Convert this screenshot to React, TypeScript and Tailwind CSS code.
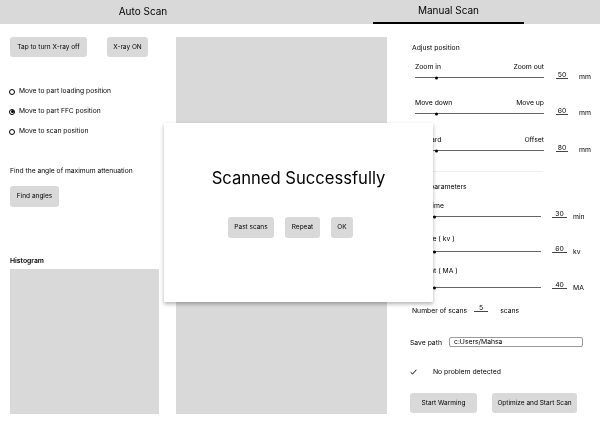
import type { ReactNode } from 'react'

function Btn({ children, className = '' }: { children: ReactNode; className?: string }) {
  return (
    <div
      className={`flex items-center justify-center rounded-[3px] bg-[#d9d9d9] text-[6.5px] leading-[9px] text-black ${className}`}
    >
      {children}
    </div>
  )
}

function Radio({ label, checked = false }: { label: string; checked?: boolean }) {
  return (
    <div className="flex h-[9px] items-center gap-[4px] text-[6.7px] leading-[9px]">
      <span className="-ml-[1px] flex h-[6px] w-[6px] flex-none items-center justify-center rounded-full border border-black">
        {checked && <span className="h-[3px] w-[3px] rounded-full bg-black" />}
      </span>
      {label}
    </div>
  )
}

type AdjustProps = { left: string; right: string; value: string; className: string }

function AdjustSlider({ left, right, value, className }: AdjustProps) {
  return (
    <div className={className}>
      <div className="flex w-[134px] justify-between pl-[5px] text-[6.8px] leading-[9px]">
        <span>{left}</span>
        <span>{right}</span>
      </div>
      <div className="mt-[2px] flex h-[9px] items-center pl-[5px] text-[6.8px]">
        <div className="relative h-px w-[129px] flex-none bg-[#666]">
          <span className="absolute left-[20px] top-1/2 h-[3px] w-[3px] -translate-y-1/2 rounded-full bg-black" />
        </div>
        <span className="mb-[5px] ml-[12px] w-[12px] border-b border-[#444] text-center leading-[7px]">{value}</span>
        <span className="mb-[2px] ml-[11px] leading-[9px]">mm</span>
      </div>
    </div>
  )
}

type ParamProps = { label: string; value: string; unit: string; className: string; trackGap: string }

function ParamSlider({ label, value, unit, className, trackGap }: ParamProps) {
  return (
    <div className={className}>
      <div className="pl-[2px] text-[6.8px] leading-[9px]">{label}</div>
      <div className={`flex h-[9px] items-center pl-[5px] text-[6.8px] ${trackGap}`}>
        <div className="relative h-px w-[126px] flex-none bg-[#666]">
          <span className="absolute left-[18px] top-1/2 h-[3px] w-[3px] -translate-y-1/2 rounded-full bg-black" />
        </div>
        <span className="mb-[6px] ml-[11px] w-[15px] border-b border-[#444] text-center leading-[7px]">{value}</span>
        <span className="ml-[6px] leading-[9px]">{unit}</span>
      </div>
    </div>
  )
}

export default function App() {
  return (
    <div className="relative h-[428px] w-[600px] overflow-hidden bg-white font-[Inter,sans-serif] text-black will-change-transform">
      {/* tabs */}
      <div className="flex h-[24px] bg-[#d9d9d9] text-[10px]">
        <div className="ml-[67px] flex h-[22px] w-[152px] items-center justify-center">Auto Scan</div>
        <div className="ml-[154px] flex h-[24px] w-[151px] items-center justify-center border-b-2 border-black pb-[1px]">
          Manual Scan
        </div>
      </div>

      <div className="flex">
        {/* left column */}
        <div className="flex w-[164px] flex-none flex-col pl-[10px]">
          <div className="mt-[13px] flex gap-[20px]">
            <Btn className="h-[20px] w-[77px]">Tap to turn X-ray off</Btn>
            <Btn className="h-[20px] w-[41px]">X-ray ON</Btn>
          </div>
          <div className="mt-[30px] flex flex-col gap-[11px]">
            <Radio label="Move to part loading position" />
            <Radio label="Move to part FFC position" checked />
            <Radio label="Move to scan position" />
          </div>
          <div className="mt-[31px] text-[6.7px] leading-[9px]">Find the angle of maximum attenuation</div>
          <Btn className="mt-[10px] h-[21px] w-[49px]">Find angles</Btn>
          <div className="mt-[49px] text-[6.8px] font-semibold leading-[9px]">Histogram</div>
          <div className="mt-[4px] h-[145px] w-[149px] bg-[#d9d9d9]" />
        </div>

        {/* center column */}
        <div className="ml-[12px] flex w-[211px] flex-none flex-col">
          <div className="mt-[13px] h-[225px] bg-[#d9d9d9]" />
          <div className="mt-[7px] h-[145px] bg-[#d9d9d9]" />
        </div>

        {/* right column */}
        <div className="ml-[23px] flex w-[190px] flex-none flex-col">
          <div className="ml-[2px] mt-[19px] text-[6.8px] leading-[9px]">Adjust position</div>
          <AdjustSlider className="mt-[10px]" left="Zoom in" right="Zoom out" value="50" />
          <AdjustSlider className="mt-[16px]" left="Move down" right="Move up" value="60" />
          <AdjustSlider className="mt-[17px]" left="Forward" right="Offset" value="80" />
          <div className="ml-[2px] mt-[16px] h-px w-[131px] bg-[#eeeeee]" />
          <div className="ml-[2px] mt-[10px] text-[6.8px] leading-[9px]">Scan parameters</div>
          <ParamSlider className="mt-[10px]" trackGap="mt-[2px]" label="Scan time" value="30" unit="min" />
          <ParamSlider className="mt-[13px]" trackGap="mt-[4px]" label="Voltage ( kv )" value="60" unit="kv" />
          <ParamSlider className="mt-[10px]" trackGap="mt-[8px]" label="Current ( MA )" value="40" unit="MA" />

          <div className="ml-[2px] mt-[14px] flex h-[9px] items-center text-[6.8px] leading-[9px]">
            <span>Number of scans</span>
            <span className="mb-[6px] ml-[7px] w-[14px] border-b border-[#444] text-center leading-[7px]">5</span>
            <span className="ml-[12px]">scans</span>
          </div>

          <div className="mt-[22px] flex h-[10px] items-center text-[6.8px]">
            <span className="w-[39px] flex-none leading-[9px]">Save path</span>
            <div className="flex h-[10px] w-[134px] items-center rounded-[2px] border border-[#9a9a9a] pl-[4px] leading-[8px]">
              c:Users/Mahsa
            </div>
          </div>

          <div className="mt-[20px] flex h-[9px] items-center gap-[16px] text-[6.8px] leading-[9px]">
            <svg width="7" height="6" viewBox="0 0 7 6" fill="none">
              <path d="M0.6 3.2 L2.5 5 L6.4 0.8" stroke="black" strokeWidth="1" />
            </svg>
            <span>No problem detected</span>
          </div>

          <div className="mt-[17px] flex">
            <Btn className="h-[20px] w-[67px]">Start Warming</Btn>
            <Btn className="ml-[15px] h-[20px] w-[85px]">Optimize and Start Scan</Btn>
          </div>
        </div>
      </div>

      {/* success dialog */}
      <div className="absolute left-[164px] top-[123px] h-[179px] w-[269px] bg-white shadow-[0_2px_4px_rgba(0,0,0,0.3)]">
        <div className="pt-[45px] text-center text-[16.6px] leading-[20px] text-black">Scanned Successfully</div>
        <div className="mt-[29px] flex gap-[11px] pl-[64px]">
          <Btn className="h-[21px] w-[46px]">Past scans</Btn>
          <Btn className="h-[21px] w-[35px]">Repeat</Btn>
          <Btn className="h-[21px] w-[22px]">OK</Btn>
        </div>
      </div>
    </div>
  )
}
